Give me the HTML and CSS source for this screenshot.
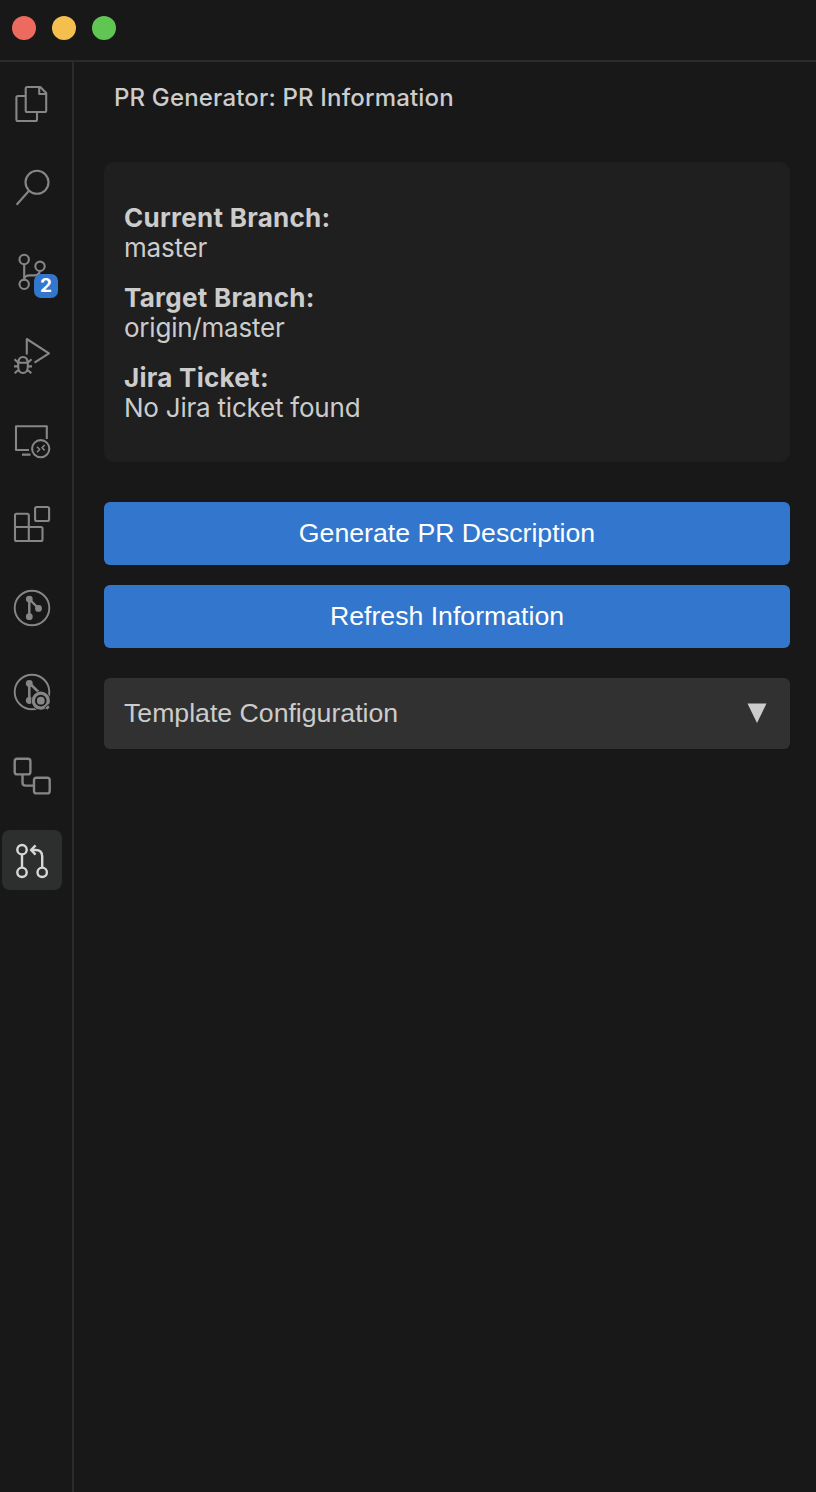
FILE: index.html
```
<!DOCTYPE html>
<html lang="en">
<head>
<meta charset="utf-8">
<title>PR Generator</title>
<link rel="stylesheet" href="styles.css">
</head>
<body>
<div class="window">
  <header class="titlebar">
    <span class="light light-close"></span>
    <span class="light light-min"></span>
    <span class="light light-max"></span>
  </header>
  <div class="workbench">
    <nav class="activity-bar">
      <a class="item"><svg viewBox="2 0 60 60"><path d="M27.300 13H40.300L46.200 19V36.500Q46.200 38 44.700 38H27.300Q25.700 38 25.700 36.500V14.500Q25.700 13 27.300 13ZM39.200 13V20H46M25.700 22H18Q16.400 22 16.400 23.500V45.500Q16.400 47 18 47H35.300Q37 47 37 45.500V38"/></svg></a>
      <a class="item"><svg viewBox="2 0 60 60"><circle cx="37" cy="24.300" r="11.500"/><path d="M29 32.800L16.600 46.800"/></svg></a>
      <a class="item"><svg viewBox="2 0 60 60"><circle cx="24.200" cy="17.500" r="4.700"/><circle cx="24.200" cy="42.300" r="4.700"/><circle cx="40" cy="24.300" r="4.700"/><path d="M24.200 22.300V37.600C24.200 35 26.500 33.400 29.500 33.400H34.500C37.500 33.400 39.500 31.500 39.800 29"/></svg><span class="badge">2</span></a>
      <a class="item"><svg viewBox="2 0 60 60"><path d="M26.800 28.500V13L49 27.300L34.500 36.600"/><path d="M18.200 36.700H27.800V41C27.800 44.500 25.800 47 23 47S18.200 44.500 18.200 41ZM18.500 36.500C18.500 33 20.300 31 23 31S27.500 33 27.500 36.500M18.200 36.700L14.500 33.200M27.800 36.700L31.500 33.200M18.200 40.400H14M27.800 40.400H32M18.700 43.500L14.700 47.300M27.300 43.500L31.300 47.300"/></svg></a>
      <a class="item"><svg viewBox="2 0 60 60"><path d="M29 40H16V16.300H46.800V29M22 44.600H30.500"/><circle cx="40.700" cy="38.700" r="8.600"/><path class="fine" d="M37 36.800L39.700 39.500L37 42.200M44.700 35L42 37.700L44.700 40.400"/></svg></a>
      <a class="item"><svg viewBox="2 0 60 60"><rect x="35.100" y="13" width="14" height="14" rx="1.800"/><path d="M28.800 33V21.200Q28.800 19.700 27.300 19.700H16.500Q15 19.700 15 21.200V45.500Q15 47 16.500 47H41Q42.500 47 42.500 45.500V34.500Q42.500 33 41 33H15M28.800 33V47"/></svg></a>
      <a class="item"><svg viewBox="2 0 60 60"><circle class="thin" cx="32" cy="30" r="17.300"/><path class="thick" d="M29.300 21V38.700M29.300 21L38.500 30.500"/><g class="solid"><circle cx="29.300" cy="21.100" r="3.400"/><circle cx="38.500" cy="30.400" r="3.400"/><circle cx="29.300" cy="38.700" r="3.400"/></g></svg></a>
      <a class="item"><svg viewBox="2 0 60 60"><circle class="thin" cx="32" cy="30" r="17.300"/><path class="thick" d="M29.300 21V38.700M29.300 21L39 30.500"/><g class="solid"><circle cx="29.300" cy="21.400" r="3.400"/><circle cx="29.300" cy="38.500" r="3.400"/><circle class="cutout" cx="40.800" cy="38.700" r="9.800"/><circle cx="40.800" cy="38.700" r="3.900"/></g><circle class="lens" cx="40.800" cy="38.700" r="7.500"/><path class="lens" d="M46 44L48.500 46.500"/><path class="slit" d="M44.500 46.300L49.200 41.600"/></svg></a>
      <a class="item"><svg class="medium" viewBox="2 0 60 60"><rect x="14.700" y="12.700" width="15.700" height="15.700" rx="2.500"/><rect x="34" y="31.700" width="15.700" height="15.700" rx="2.500"/><path d="M22.500 28.500V36.500Q22.500 39.600 25.600 39.600H34"/></svg></a>
      <a class="item item-active"><svg class="medium" viewBox="2 0 60 60"><circle cx="22" cy="19.700" r="4.700"/><circle cx="22" cy="42.300" r="4.700"/><circle cx="42.200" cy="42.300" r="4.700"/><path d="M22 24.500V37.500M42.200 37.500V26.500Q42.200 20 35.700 20H31.500M35.600 15.300L31 20L35.600 24.700"/></svg></a>
    </nav>
    <main class="panel">
      <h1 class="panel-title">PR Generator: PR Information</h1>
      <dl class="info">
        <div class="field"><dt>Current Branch:</dt><dd>master</dd></div>
        <div class="field"><dt>Target Branch:</dt><dd>origin/master</dd></div>
        <div class="field"><dt>Jira Ticket:</dt><dd>No Jira ticket found</dd></div>
      </dl>
      <button class="button">Generate PR Description</button>
      <button class="button">Refresh Information</button>
      <button class="accordion"><span>Template Configuration</span><svg class="caret" viewBox="0 0 20 20"><path d="M0.500 0.500H19.500L10 20Z"/></svg></button>
    </main>
  </div>
</div>
</body>
</html>
```
FILE: styles.css
```
* { box-sizing: border-box; }
body { margin: 0; background: #181818; color: #cccccc; font-family: Inter, sans-serif; }
.window { display: flex; flex-direction: column; height: 1492px; }
.titlebar { display: flex; gap: 16px; height: 62px; padding: 16px 12px; border-bottom: 2px solid #2b2b2b; }
.light { width: 24px; height: 24px; border-radius: 50%; }
.light-close { background: #ed6a5e; }
.light-min { background: #f5bf4f; }
.light-max { background: #61c554; }
.workbench { display: flex; flex: 1; }
.activity-bar { display: flex; flex-direction: column; gap: 24px; width: 74px; padding: 12px 0 0 2px; border-right: 2px solid #2b2b2b; }
.item { position: relative; width: 60px; height: 60px; border-radius: 8px; color: #868686; }
.item-active { background: #2d2f2f; color: #d7d7d7; }
.item svg { display: block; width: 60px; height: 60px; fill: none; stroke: currentColor; stroke-width: 2.1; stroke-linejoin: round; }
.item svg.medium { stroke-width: 2.4; }
.item .fine { stroke-width: 1.6; }
.item .thin { stroke-width: 1.9; }
.item .thick { stroke-width: 2.5; }
.item .solid { fill: currentColor; stroke: none; }
.item .cutout { fill: #181818; }
.item .lens { stroke-width: 3.3; }
.item .slit { stroke: #181818; stroke-width: 1; }
.badge { position: absolute; left: 32px; top: 32px; width: 24px; height: 24px; border-radius: 7px; background: #3376cd; color: #fff; font-size: 19px; font-weight: 700; line-height: 24px; text-align: center; }
.panel { display: flex; flex-direction: column; flex: 1; padding: 20px 26px 0 30px; }
.panel-title { margin: 0 0 48px 10px; font-size: 24px; font-weight: 500; line-height: 32px; letter-spacing: 0.17px; }
.info { display: flex; flex-direction: column; gap: 20px; height: 300px; margin: 0 0 40px; padding: 41px 20px; border-radius: 10px; background: #1f1f1f; font-size: 26px; line-height: 30px; }
.info dt { font-weight: 700; letter-spacing: 0.27px; }
.info dd { margin: 0; letter-spacing: -0.22px; }
.button { height: 63px; margin: 0 0 20px; padding: 0; border: 0; border-radius: 6px; background: #3376cd; color: #fff; font: 26.67px "Liberation Sans", Arial, sans-serif; }
.accordion { display: flex; align-items: center; justify-content: space-between; height: 71px; margin-top: 10px; padding: 0 23px 0 20px; border: 0; border-radius: 6px; background: #313131; color: #cccccc; font: 26.67px "Liberation Sans", Arial, sans-serif; }
.caret { width: 20px; height: 20px; margin-bottom: 2px; fill: currentColor; }
```
